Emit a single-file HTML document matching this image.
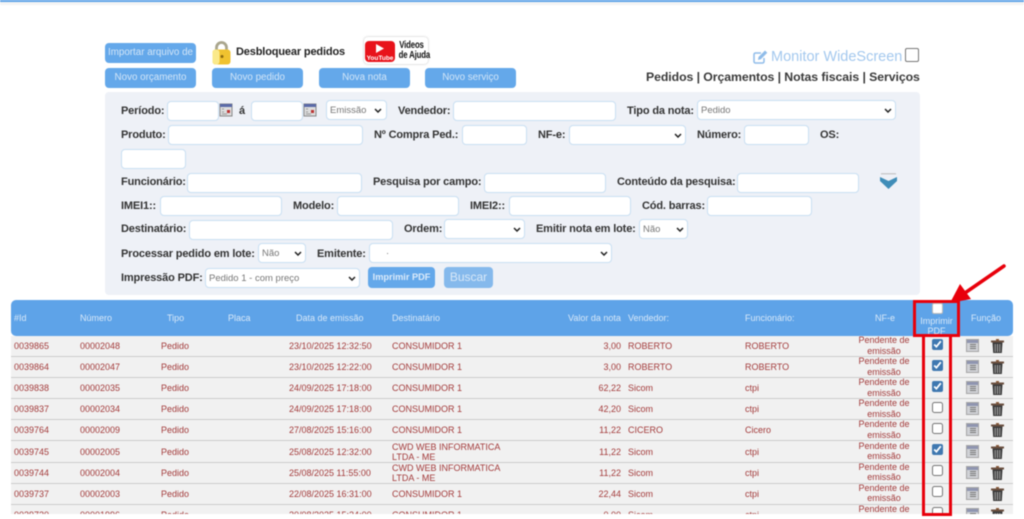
<!DOCTYPE html>
<html lang="pt-BR"><head><meta charset="utf-8"><title>Pedidos</title>
<style>
html,body{margin:0;padding:0;background:#fff;width:1024px;height:519px;overflow:hidden}
#w{position:relative;width:1024px;height:519px;overflow:hidden;font-family:"Liberation Sans",sans-serif;filter:blur(.5px)}
#w>*{position:absolute}
.btn{background:#64a8ea;color:#d3e6f8;border-radius:4px;height:20px;line-height:20px;text-align:center;font-size:9.8px;width:91px;top:68px}
.l{font-size:11px;font-weight:bold;color:#333;line-height:20px;white-space:nowrap;letter-spacing:-.15px}
input.i,select.i{box-sizing:border-box;height:20px;background:#fff;border:1px solid #c9dff2;border-radius:4px;margin:0;padding:0 3px;font:9.5px "Liberation Sans",sans-serif;color:#777}
select.i{appearance:none;-webkit-appearance:none}
.ch{width:8px;height:5px}
.panel{left:105px;top:92px;width:815px;height:203px;background:#eef1f7;border-radius:4px}
.hd{left:11px;top:300px;width:1002px;height:36px;background:#5ea3e8;border-radius:5px}
.h{font-size:9px;color:#d9e9f9;line-height:12px;top:312px;white-space:nowrap}
#rows{left:11px;top:336px;width:1002px;height:178px;overflow:hidden;background:#f1f1f1}
.r{position:absolute;left:0;width:1002px;height:21.1px;border-bottom:1.5px solid #ccc;box-sizing:border-box;font-size:9px;color:#a33b3b}
.r span{position:absolute;top:5px;line-height:10px;white-space:nowrap}
.r .d2{top:0}
.a{left:3px}.b{left:69px}.c{left:150px}.d{left:278px}.e{left:381px}.f{right:392px}.g{left:617px}.k{left:734px}
.r .n{left:833px;width:80px;text-align:center;top:-1px;line-height:10.5px}
.r input{position:absolute;left:920.5px;top:2.5px;width:11px;height:11px;margin:0;accent-color:#3f78b0}
.r svg{position:absolute;top:3px}
.t1{left:955px;width:13px;height:13px}.t2{left:980px;width:13px;height:14px}
.red{border:3px solid #e8000b;box-sizing:border-box}
</style></head><body>
<div id="w">
<svg width="0" height="0" style="position:absolute"><defs>
<symbol id="cal" viewBox="0 0 14 14"><rect x="1" y="1" width="12" height="12" fill="#ddd" stroke="#888"/><rect x="1" y="1" width="12" height="3" fill="#5a6aa8"/><rect x="8" y="7" width="3" height="3" fill="#b33"/><path d="M3 6h2M3 9h2M3 11h5" stroke="#999"/></symbol>
<symbol id="tb" viewBox="0 0 13 13"><rect x=".5" y=".5" width="12" height="12" fill="#d0d2d6" stroke="#a5a5a5"/><rect x="1" y="1" width="11" height="3" fill="#8f95b0"/><path d="M4 5.500h6M4 7.500h6M4 9.500h6" stroke="#777"/></symbol>
<symbol id="tr" viewBox="0 0 13 14"><rect x="5" y="0" width="3" height="2" fill="#8a5a3a"/><rect x="0" y="1.500" width="13" height="2" fill="#6b5040"/><path d="M1.500 3.500h10l-.7 10.500H2.200z" fill="#3a3a3a"/><path d="M4.200 5v8M6.500 5v8M8.800 5v8" stroke="#aaa"/></symbol>
<symbol id="cv" viewBox="0 0 8 5"><path d="M1 1l3 3 3-3" fill="none" stroke="#222" stroke-width="1.500"/></symbol>
</defs></svg>

<div style="left:0;top:0;width:1024px;height:2px;background:#5ea3e8"></div>
<div style="left:0;top:2px;width:1024px;height:3px;background:#f4f4f4"></div>

<div class="btn" style="left:105px;top:43px;overflow:hidden;white-space:nowrap">Importar arquivo de</div>
<div class="btn" style="left:105px">Novo orçamento</div>
<div class="btn" style="left:212px">Novo pedido</div>
<div class="btn" style="left:319px">Nova nota</div>
<div class="btn" style="left:425px">Novo serviço</div>

<svg style="left:211px;top:41px" width="21" height="24" viewBox="0 0 21 24"><path d="M5.500 10V6.500a5 5 0 0 1 10 0V10" fill="none" stroke="#a9a58c" stroke-width="2.800"/><rect x="1.500" y="8.500" width="18" height="15" rx="3" fill="#f0c22f"/><rect x="1.500" y="8.500" width="7" height="15" rx="3" fill="#fae98a"/><circle cx="11" cy="15.500" r="1.500" fill="#8a6a10"/></svg>
<div class="l" style="left:236px;top:42px;color:#222">Desbloquear pedidos</div>

<div style="left:364px;top:37px;width:64px;height:27px;background:#fff;border-radius:4px;box-shadow:0 0 2px #bbb"></div>
<svg style="left:365px;top:41px" width="30" height="21" viewBox="0 0 30 21"><rect x="0" y="0" width="30" height="21" rx="4" fill="#e8131b"/><path d="M11 3l8 4.500-8 4.500z" fill="#fff"/><text x="15" y="19" font-family="Liberation Sans" font-size="6.500" font-weight="bold" fill="#fff" text-anchor="middle">YouTube</text></svg>
<div style="left:395px;top:41px;width:33px;text-align:center;font-size:10px;font-weight:bold;line-height:10px;color:#111;white-space:nowrap;transform:scaleX(.78);letter-spacing:-.2px">Videos<br>de Ajuda</div>

<svg style="left:753px;top:50px" width="15" height="14" viewBox="0 0 15 14"><path d="M11 8v3.500a1.500 1.500 0 0 1-1.500 1.500h-7A1.500 1.500 0 0 1 1 11.500v-7A1.500 1.500 0 0 1 2.500 3H8" fill="none" stroke="#8fbce9" stroke-width="1.500"/><path d="M5.500 7l6.500-6.500 2.300 2.300L7.800 9.300 5 10z" fill="#8fbce9"/></svg>
<div style="left:771px;top:48px;font-size:14.5px;line-height:18px;color:#a3c8ee;white-space:nowrap">Monitor WideScreen</div>
<div style="left:905px;top:48px;width:14px;height:14px;box-sizing:border-box;border:1px solid #777;border-radius:2px;background:#fff"></div>
<div style="left:646px;top:69px;font-size:12.3px;font-weight:bold;color:#3a3a3a;line-height:16px;white-space:nowrap;letter-spacing:-.08px">Pedidos | Orçamentos | Notas fiscais | Serviços</div>

<div class="panel"></div>

<div class="l" style="left:121px;top:101px">Período:</div>
<input class="i" style="left:167px;top:101px;width:52px">
<svg style="left:219px;top:103px" width="14" height="14"><use href="#cal"/></svg>
<div class="l" style="left:239px;top:101px">á</div>
<input class="i" style="left:251px;top:101px;width:52px">
<svg style="left:303px;top:103px" width="14" height="14"><use href="#cal"/></svg>
<select class="i" style="left:326px;top:100px;width:61px"><option>Emissão</option></select>
<svg class="ch" style="left:374px;top:108px"><use href="#cv"/></svg>
<div class="l" style="left:398px;top:101px">Vendedor:</div>
<input class="i" style="left:453px;top:101px;width:163px">
<div class="l" style="left:627px;top:101px">Tipo da nota:</div>
<select class="i" style="left:697px;top:100px;width:199px"><option>Pedido</option></select>
<svg class="ch" style="left:884px;top:108px"><use href="#cv"/></svg>

<div class="l" style="left:121px;top:125px">Produto:</div>
<input class="i" style="left:168px;top:125px;width:195px">
<div class="l" style="left:374px;top:125px">Nº Compra Ped.:</div>
<input class="i" style="left:462px;top:125px;width:65px">
<div class="l" style="left:538px;top:125px">NF-e:</div>
<select class="i" style="left:569px;top:125px;width:117px"><option></option></select>
<svg class="ch" style="left:674px;top:133px"><use href="#cv"/></svg>
<div class="l" style="left:697px;top:125px">Número:</div>
<input class="i" style="left:744px;top:125px;width:65px">
<div class="l" style="left:820px;top:125px">OS:</div>
<input class="i" style="left:121px;top:149px;width:65px">

<div class="l" style="left:121px;top:172px">Funcionário:</div>
<input class="i" style="left:187px;top:173px;width:175px">
<div class="l" style="left:373px;top:172px">Pesquisa por campo:</div>
<input class="i" style="left:484px;top:173px;width:122px">
<div class="l" style="left:617px;top:172px">Conteúdo da pesquisa:</div>
<input class="i" style="left:737px;top:173px;width:122px">
<svg style="left:880px;top:173px" width="17" height="17" viewBox="0 0 17 17"><path d="M1 0.800h15" stroke="#bbb" stroke-width="1"/><path d="M0 4l8.500 4L17 4v4l-8.500 8L0 8z" fill="#3f8db8"/></svg>

<div class="l" style="left:121px;top:196px">IMEI1::</div>
<input class="i" style="left:160px;top:196px;width:122px">
<div class="l" style="left:293px;top:196px">Modelo:</div>
<input class="i" style="left:337px;top:196px;width:122px">
<div class="l" style="left:470px;top:196px">IMEI2::</div>
<input class="i" style="left:509px;top:196px;width:122px">
<div class="l" style="left:642px;top:196px">Cód. barras:</div>
<input class="i" style="left:707px;top:196px;width:105px">

<div class="l" style="left:121px;top:219px">Destinatário:</div>
<input class="i" style="left:189px;top:220px;width:204px">
<div class="l" style="left:404px;top:219px">Ordem:</div>
<select class="i" style="left:444px;top:219px;width:81px"><option></option></select>
<svg class="ch" style="left:513px;top:227px"><use href="#cv"/></svg>
<div class="l" style="left:536px;top:219px">Emitir nota em lote:</div>
<select class="i" style="left:639px;top:219px;width:49px"><option>Não</option></select>
<svg class="ch" style="left:676px;top:227px"><use href="#cv"/></svg>

<div class="l" style="left:121px;top:244px">Processar pedido em lote:</div>
<select class="i" style="left:258px;top:243px;width:48px"><option>Não</option></select>
<svg class="ch" style="left:294px;top:251px"><use href="#cv"/></svg>
<div class="l" style="left:317px;top:244px">Emitente:</div>
<select class="i" style="left:369px;top:243px;width:243px;padding-left:16px"><option>·</option></select>
<svg class="ch" style="left:600px;top:251px"><use href="#cv"/></svg>

<div class="l" style="left:121px;top:268px">Impressão PDF:</div>
<select class="i" style="left:205px;top:268px;width:155px"><option>Pedido 1 - com preço</option></select>
<svg class="ch" style="left:348px;top:276px"><use href="#cv"/></svg>
<div style="left:368px;top:267px;width:67px;height:21px;line-height:21px;background:#64a8ea;color:#dcebfa;border-radius:4px;text-align:center;font-size:9.2px;font-weight:bold">Imprimir PDF</div>
<div style="left:444px;top:267px;width:49px;height:21px;line-height:21px;background:#85b9ec;color:#d8e8f8;border-radius:4px;text-align:center;font-size:12px">Buscar</div>

<div class="hd"></div>
<div class="h" style="left:14px">#Id</div>
<div class="h" style="left:80px">Número</div>
<div class="h" style="left:167px">Tipo</div>
<div class="h" style="left:228px">Placa</div>
<div class="h" style="left:296px">Data de emissão</div>
<div class="h" style="left:392px">Destinatário</div>
<div class="h" style="left:568px">Valor da nota</div>
<div class="h" style="left:628px">Vendedor:</div>
<div class="h" style="left:745px">Funcionário:</div>
<div class="h" style="left:875px">NF-e</div>
<div class="h" style="left:971px">Função</div>
<div style="left:932px;top:303px;width:9px;height:9px;background:#fff;border:1px solid #bbb;border-radius:2px"></div>
<div class="h" style="left:913px;width:47px;text-align:center;top:315.5px;line-height:10.5px">Imprimir<br>PDF</div>

<div id="rows">
<div class="r" style="top:0"><span class="a">0039865</span><span class="b">00002048</span><span class="c">Pedido</span><span class="d">23/10/2025 12:32:50</span><span class="e">CONSUMIDOR 1</span><span class="f">3,00</span><span class="g">ROBERTO</span><span class="k">ROBERTO</span><span class="n">Pendente de<br>emissão</span><input type="checkbox" checked><svg class="t1"><use href="#tb"/></svg><svg class="t2"><use href="#tr"/></svg></div>
<div class="r" style="top:21.1px"><span class="a">0039864</span><span class="b">00002047</span><span class="c">Pedido</span><span class="d">23/10/2025 12:22:00</span><span class="e">CONSUMIDOR 1</span><span class="f">3,00</span><span class="g">ROBERTO</span><span class="k">ROBERTO</span><span class="n">Pendente de<br>emissão</span><input type="checkbox" checked><svg class="t1"><use href="#tb"/></svg><svg class="t2"><use href="#tr"/></svg></div>
<div class="r" style="top:42.2px"><span class="a">0039838</span><span class="b">00002035</span><span class="c">Pedido</span><span class="d">24/09/2025 17:18:00</span><span class="e">CONSUMIDOR 1</span><span class="f">62,22</span><span class="g">Sicom</span><span class="k">ctpi</span><span class="n">Pendente de<br>emissão</span><input type="checkbox" checked><svg class="t1"><use href="#tb"/></svg><svg class="t2"><use href="#tr"/></svg></div>
<div class="r" style="top:63.3px"><span class="a">0039837</span><span class="b">00002034</span><span class="c">Pedido</span><span class="d">24/09/2025 17:18:00</span><span class="e">CONSUMIDOR 1</span><span class="f">42,20</span><span class="g">Sicom</span><span class="k">ctpi</span><span class="n">Pendente de<br>emissão</span><input type="checkbox"><svg class="t1"><use href="#tb"/></svg><svg class="t2"><use href="#tr"/></svg></div>
<div class="r" style="top:84.4px"><span class="a">0039764</span><span class="b">00002009</span><span class="c">Pedido</span><span class="d">27/08/2025 15:16:00</span><span class="e">CONSUMIDOR 1</span><span class="f">11,22</span><span class="g">CICERO</span><span class="k">Cicero</span><span class="n">Pendente de<br>emissão</span><input type="checkbox"><svg class="t1"><use href="#tb"/></svg><svg class="t2"><use href="#tr"/></svg></div>
<div class="r" style="top:105.5px"><span class="a">0039745</span><span class="b">00002005</span><span class="c">Pedido</span><span class="d">25/08/2025 12:32:00</span><span class="e d2">CWD WEB INFORMATICA<br>LTDA - ME</span><span class="f">11,22</span><span class="g">Sicom</span><span class="k">ctpi</span><span class="n">Pendente de<br>emissão</span><input type="checkbox" checked><svg class="t1"><use href="#tb"/></svg><svg class="t2"><use href="#tr"/></svg></div>
<div class="r" style="top:126.6px"><span class="a">0039744</span><span class="b">00002004</span><span class="c">Pedido</span><span class="d">25/08/2025 11:55:00</span><span class="e d2">CWD WEB INFORMATICA<br>LTDA - ME</span><span class="f">11,22</span><span class="g">Sicom</span><span class="k">ctpi</span><span class="n">Pendente de<br>emissão</span><input type="checkbox"><svg class="t1"><use href="#tb"/></svg><svg class="t2"><use href="#tr"/></svg></div>
<div class="r" style="top:147.7px"><span class="a">0039737</span><span class="b">00002003</span><span class="c">Pedido</span><span class="d">22/08/2025 16:31:00</span><span class="e">CONSUMIDOR 1</span><span class="f">22,44</span><span class="g">Sicom</span><span class="k">ctpi</span><span class="n">Pendente de<br>emissão</span><input type="checkbox"><svg class="t1"><use href="#tb"/></svg><svg class="t2"><use href="#tr"/></svg></div>
<div class="r" style="top:168.8px"><span class="a">0039720</span><span class="b">00001996</span><span class="c">Pedido</span><span class="d">20/08/2025 15:24:00</span><span class="e">CONSUMIDOR 1</span><span class="f">0,00</span><span class="g">Sicom</span><span class="k">ctpi</span><span class="n">Pendente de<br>emissão</span><input type="checkbox"><svg class="t1"><use href="#tb"/></svg><svg class="t2"><use href="#tr"/></svg></div>
</div>

<div class="red" style="left:913px;top:300px;width:47px;height:37px"></div>
<div class="red" style="left:922px;top:336px;width:30px;height:180px;border-top:none"></div>
<svg style="left:940px;top:258px" width="70" height="52" viewBox="0 0 70 52"><path d="M64 8L22 37" stroke="#e8000b" stroke-width="3.500" stroke-linecap="round"/><path d="M10 45L20 26l11 15z" fill="#e8000b"/></svg>
</div>
</body></html>
